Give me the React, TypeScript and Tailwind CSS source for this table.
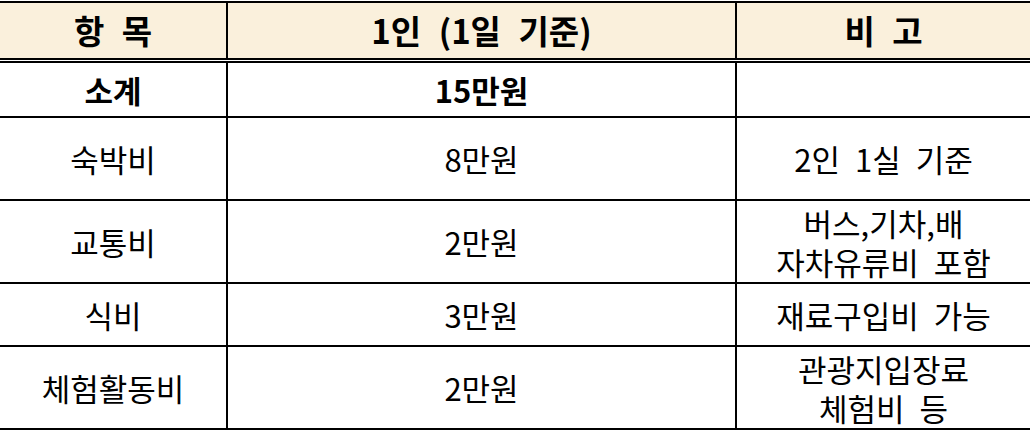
const rows = [
  { item: "소계", cost: "15만원", note: [""], bold: true, h: "h-[57px]" },
  { item: "숙박비", cost: "8만원", note: ["2인 1실 기준"], h: "h-[83px]" },
  { item: "교통비", cost: "2만원", note: ["버스,기차,배", "자차유류비 포함"], h: "h-[83px]" },
  { item: "식비", cost: "3만원", note: ["재료구입비 가능"], h: "h-[63px]" },
  { item: "체험활동비", cost: "2만원", note: ["관광지입장료", "체험비 등"], h: "h-[83px]" },
]

export default function App() {
  return (
    <div className="w-[1030px] h-[432px] bg-white pt-px font-['Noto_Sans_CJK_KR',sans-serif] text-black">
      <table className="w-full border-collapse table-fixed text-[31px] leading-[39px]">
        <colgroup>
          <col className="w-[227px]" />
          <col className="w-[509px]" />
          <col />
        </colgroup>
        <thead>
          <tr className="h-[58px] bg-[#faf0dc] border-t-2 border-[#000] text-[33px] [word-spacing:10px]">
            <th className="font-bold border-r-2 border-r-[#000] border-b-[5px] border-b-[#000] border-double">항 목</th>
            <th className="font-bold border-r-2 border-r-[#000] border-b-[5px] border-b-[#000] border-double">1인 (1일 기준)</th>
            <th className="font-bold border-b-[5px] border-b-[#000] border-double">비 고</th>
          </tr>
        </thead>
        <tbody>
          {rows.map((r) => (
            <tr key={r.item} className={`${r.h} border-b-2 border-[#000]`}>
              <td className={`text-center border-r-2 border-r-[#000] ${r.bold ? "font-bold" : ""}`}>{r.item}</td>
              <td className={`text-center border-r-2 border-r-[#000] ${r.bold ? "font-bold" : ""}`}>{r.cost}</td>
              <td className="text-center [word-spacing:8px]">
                {r.note.map((n) => (
                  <div key={n}>{n}</div>
                ))}
              </td>
            </tr>
          ))}
        </tbody>
      </table>
    </div>
  )
}
